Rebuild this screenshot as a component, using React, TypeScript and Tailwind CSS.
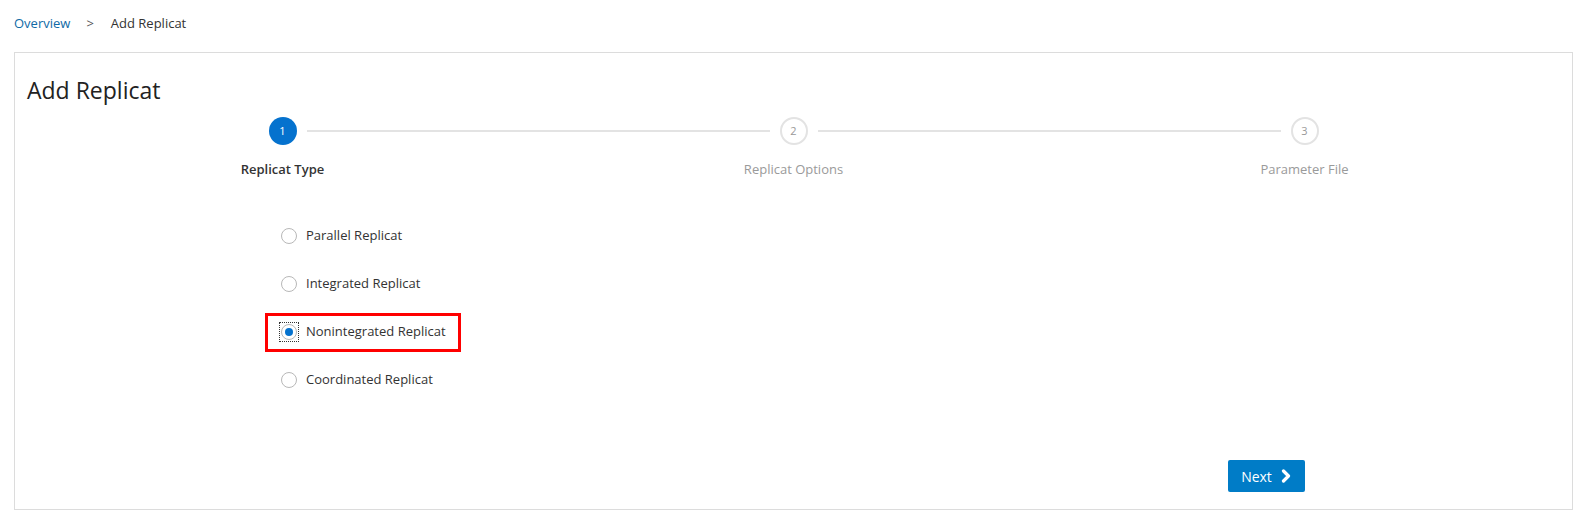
const steps = [
    { n: 1, label: 'Replicat Type', active: true },
    { n: 2, label: 'Replicat Options', active: false },
    { n: 3, label: 'Parameter File', active: false },
];

const options = [
    'Parallel Replicat',
    'Integrated Replicat',
    'Nonintegrated Replicat',
    'Coordinated Replicat',
];

export default function App() {
    const selected = 'Nonintegrated Replicat';

    return (
        <div className="min-h-[520px] bg-white text-[#333] font-['Open_Sans',sans-serif]">
            {/* Breadcrumb */}
            <div className="flex items-center pl-[14px] pt-[13px] h-[20px] text-[13px] leading-[20px] box-content">
                <a className="text-[#0f6aa6]">Overview</a>
                <span className="ml-[16px] mr-[17px] text-[#555]">&gt;</span>
                <span className="text-[#333]">Add Replicat</span>
            </div>

            {/* Panel */}
            <div className="ml-[14px] mr-[11px] mt-[19px] h-[458px] border border-[#dcdcdc] px-3">
                <h1 className="pt-[22px] text-[23px] leading-[30px] text-[#222] font-normal">Add Replicat</h1>

                {/* Stepper */}
                <div className="grid grid-cols-3 mt-[12px]">
                    {steps.map((s, i) => (
                        <div key={s.n} className="flex flex-col items-center">
                            <div className="flex items-center w-full">
                                <div className={'flex-1 h-[2px] mr-[10px] ' + (i === 0 ? '' : 'bg-[#e3e3e3]')} />
                                {s.active ? (
                                    <div className="w-[28px] h-[28px] rounded-full bg-[#0572ce] text-white text-[11px] flex items-center justify-center">
                                        {s.n}
                                    </div>
                                ) : (
                                    <div className="w-[28px] h-[28px] rounded-full border-2 border-[#e3e3e3] text-[#999] text-[11px] flex items-center justify-center">
                                        {s.n}
                                    </div>
                                )}
                                <div className={'flex-1 h-[2px] ml-[10px] ' + (i === 2 ? '' : 'bg-[#e3e3e3]')} />
                            </div>
                            <div
                                className={
                                    'mt-[14px] text-[13px] leading-[20px] ' +
                                    (s.active ? 'font-semibold text-[#333]' : 'text-[#9a9a9a]')
                                }
                            >
                                {s.label}
                            </div>
                        </div>
                    ))}
                </div>

                {/* Radio options */}
                <div className="ml-[253px] mt-[33px] flex flex-col">
                    {options.map((o) => {
                        const on = o === selected;
                        return (
                            <div key={o} className="h-[48px] flex items-center">
                                <div
                                    className={
                                        'flex items-center h-[39px] ' +
                                        (on ? 'border-[3px] border-[#ff0000] -ml-[15px] pl-[12px] pr-[12px]' : '')
                                    }
                                >
                                    <span
                                        className={
                                            'flex items-center justify-center w-[18px] h-[18px] ' +
                                            (on ? 'outline outline-1 outline-dotted outline-[#333]' : '')
                                        }
                                    >
                                        <span className="w-[16px] h-[16px] rounded-full border border-[#b8b8b8] flex items-center justify-center">
                                            {on && <span className="w-[8px] h-[8px] rounded-full bg-[#0572ce]" />}
                                        </span>
                                    </span>
                                    <span className="ml-[8px] text-[13px] text-[#333]">{o}</span>
                                </div>
                            </div>
                        );
                    })}
                </div>

                {/* Footer */}
                <div className="flex justify-end mr-[255px] mt-[56px]">
                    <button className="flex items-center h-[32px] w-[77px] justify-center rounded-[2px] bg-[#007cc7] text-white text-[14px]">
                        Next
                        <svg className="ml-[9px]" width="11" height="14" viewBox="0 0 11 14" fill="none">
                            <path d="M2.5 2 L7.5 7 L2.5 12" stroke="white" strokeWidth="3.2" strokeLinecap="round" strokeLinejoin="round" />
                        </svg>
                    </button>
                </div>
            </div>
        </div>
    );
}
